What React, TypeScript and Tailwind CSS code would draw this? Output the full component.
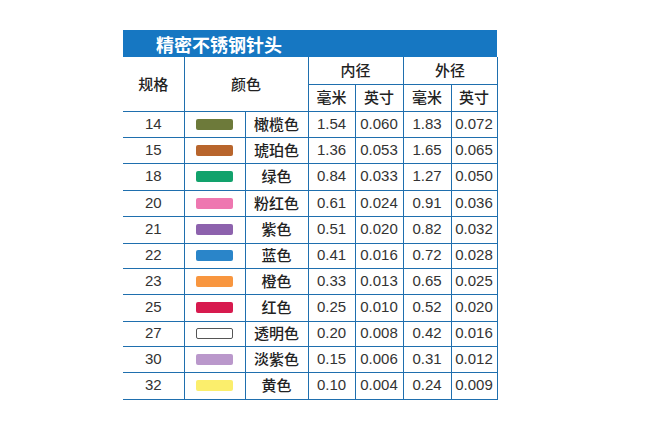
import React from 'react';

const rows = [
  { g: '14', color: 'bg-[#6d7a3a]', name: '橄榄色', a: '1.54', b: '0.060', c: '1.83', d: '0.072', h: 'h-[26px]' },
  { g: '15', color: 'bg-[#b8652c]', name: '琥珀色', a: '1.36', b: '0.053', c: '1.65', d: '0.065', h: 'h-[26px]' },
  { g: '18', color: 'bg-[#12a26c]', name: '绿色', a: '0.84', b: '0.033', c: '1.27', d: '0.050', h: 'h-[27px]' },
  { g: '20', color: 'bg-[#ee77b0]', name: '粉红色', a: '0.61', b: '0.024', c: '0.91', d: '0.036', h: 'h-[26px]' },
  { g: '21', color: 'bg-[#8d62ad]', name: '紫色', a: '0.51', b: '0.020', c: '0.82', d: '0.032', h: 'h-[27px]' },
  { g: '22', color: 'bg-[#2a85c9]', name: '蓝色', a: '0.41', b: '0.016', c: '0.72', d: '0.028', h: 'h-[25px]' },
  { g: '23', color: 'bg-[#f8963f]', name: '橙色', a: '0.33', b: '0.013', c: '0.65', d: '0.025', h: 'h-[26px]' },
  { g: '25', color: 'bg-[#d71a4e]', name: '红色', a: '0.25', b: '0.010', c: '0.52', d: '0.020', h: 'h-[27px]' },
  { g: '27', color: 'bg-white border border-[#555]', name: '透明色', a: '0.20', b: '0.008', c: '0.42', d: '0.016', h: 'h-[25px]' },
  { g: '30', color: 'bg-[#ba98cb]', name: '淡紫色', a: '0.15', b: '0.006', c: '0.31', d: '0.012', h: 'h-[26px]' },
  { g: '32', color: 'bg-[#fbee6c]', name: '黄色', a: '0.10', b: '0.004', c: '0.24', d: '0.009', h: 'h-[27px]' },
];

const cjk = "font-['Noto_Sans_CJK_SC',sans-serif]";
const num = "font-['Liberation_Sans_Narrow','Liberation_Sans',sans-serif] [font-stretch:condensed] text-[#333]";
const cell = 'border-r border-b border-[#1f6fae] p-0 text-center';

export default function App() {
  return (
    <div className="min-h-screen w-full bg-white pl-[123px] pt-[30px]">
      <div className="w-[374px]">
        {/* Title bar */}
        <div className={`h-[27px] bg-[#1677c2] pl-[33px] flex items-center text-white text-[18px] font-bold leading-none ${cjk}`}>
          精密不锈钢针头
        </div>

        <table className="w-[374px] table-fixed border-collapse text-[#222]">
          <colgroup>
            <col className="w-[61px]" />
            <col className="w-[61px]" />
            <col className="w-[63px]" />
            <col className="w-[47px]" />
            <col className="w-[48px]" />
            <col className="w-[48px]" />
            <col className="w-[46px]" />
          </colgroup>
          <thead className={`text-[15px] ${cjk}`}>
            <tr className="h-[27px]">
              <th rowSpan={2} className={`${cell} font-medium`}>规格</th>
              <th rowSpan={2} colSpan={2} className={`${cell} font-medium`}>颜色</th>
              <th colSpan={2} className={`${cell} font-medium`}>内径</th>
              <th colSpan={2} className={`${cell} font-medium`}>外径</th>
            </tr>
            <tr className="h-[27px]">
              <th className={`${cell} font-medium`}>毫米</th>
              <th className={`${cell} font-medium`}>英寸</th>
              <th className={`${cell} font-medium`}>毫米</th>
              <th className={`${cell} font-medium`}>英寸</th>
            </tr>
          </thead>
          <tbody>
            {rows.map((r) => (
              <tr key={r.g} className={r.h}>
                <td className={`${cell} ${num} text-[15px]`}>{r.g}</td>
                <td className={cell}>
                  <div className={`mx-auto w-[37px] h-[11px] rounded-[2px] ${r.color}`} />
                </td>
                <td className={`${cell} ${cjk} text-[15px] font-medium`}>{r.name}</td>
                <td className={`${cell} ${num} text-[15px]`}>{r.a}</td>
                <td className={`${cell} ${num} text-[15px]`}>{r.b}</td>
                <td className={`${cell} ${num} text-[15px]`}>{r.c}</td>
                <td className={`${cell} ${num} text-[15px]`}>{r.d}</td>
              </tr>
            ))}
          </tbody>
        </table>
      </div>
    </div>
  );
}
